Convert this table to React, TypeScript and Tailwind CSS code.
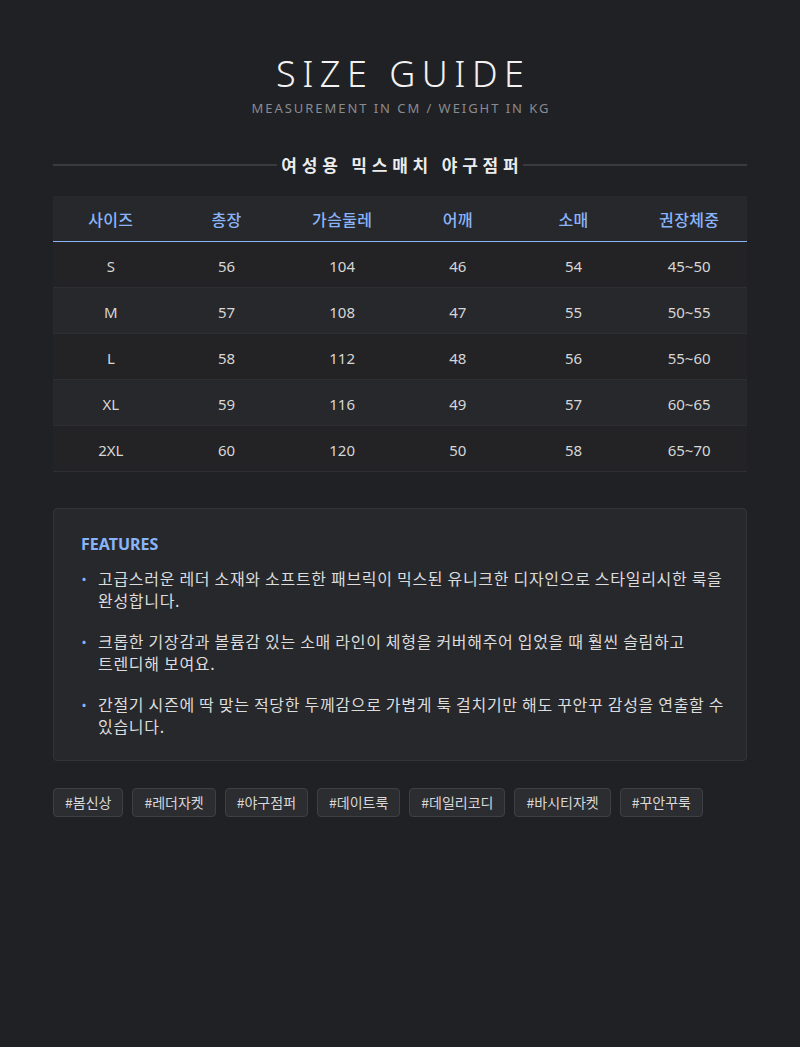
import React from "react";

const font = '"Noto Sans", "Noto Sans CJK KR", sans-serif';
const kr = '"Noto Sans CJK KR", sans-serif';

const headers = ["사이즈", "총장", "가슴둘레", "어깨", "소매", "권장체중"];
const rows = [
  ["S", "56", "104", "46", "54", "45~50"],
  ["M", "57", "108", "47", "55", "50~55"],
  ["L", "58", "112", "48", "56", "55~60"],
  ["XL", "59", "116", "49", "57", "60~65"],
  ["2XL", "60", "120", "50", "58", "65~70"],
];
const features = [
  ["고급스러운 레더 소재와 소프트한 패브릭이 믹스된 유니크한 디자인으로 스타일리시한 룩을", "완성합니다."],
  ["크롭한 기장감과 볼륨감 있는 소매 라인이 체형을 커버해주어 입었을 때 훨씬 슬림하고", "트렌디해 보여요."],
  ["간절기 시즌에 딱 맞는 적당한 두께감으로 가볍게 툭 걸치기만 해도 꾸안꾸 감성을 연출할 수", "있습니다."],
];
const tags = ["#봄신상", "#레더자켓", "#야구점퍼", "#데이트룩", "#데일리코디", "#바시티자켓", "#꾸안꾸룩"];

export default function App() {
  return (
    <div className="min-h-[1047px] w-full bg-[#202125] text-[#e0e0e0]" style={{ fontFamily: font }}>
      <div className="mx-auto w-[694px] pt-[50px]">
        <div className="flex flex-col items-center">
          <h1 className="text-[36px] font-light leading-[48px] tracking-[0.18em] pl-[0.18em] text-[#f2f2f2]">SIZE GUIDE</h1>
          <p className="mt-[1px] text-[13px] leading-[18px] tracking-[0.15em] pl-[0.15em] text-[#8a8b8f]">MEASUREMENT IN CM / WEIGHT IN KG</p>
        </div>

        <div className="mt-[36px] flex items-center">
          <div className="h-[2px] flex-1 bg-[#3a3b3f]" />
          <div className="text-[17px] font-bold tracking-[4.8px] pl-[4.8px] text-[#ececec] leading-[24px]" style={{ fontFamily: kr }}>
            여성용 믹스매치 야구점퍼
          </div>
          <div className="h-[2px] flex-1 bg-[#3a3b3f]" />
        </div>

        <div className="mt-[19px]">
          <div className="grid grid-cols-6 h-[46px] items-center bg-[#27282c] border-b border-[#8ab4f8]">
            {headers.map((h) => (
              <div key={h} className="text-center text-[16px] tracking-[0.3px] font-medium text-[#8ab4f8]" style={{ fontFamily: kr }}>
                {h}
              </div>
            ))}
          </div>
          {rows.map((r, i) => (
            <div
              key={r[0]}
              className={`grid grid-cols-6 h-[46px] pt-[3px] items-center border-b border-[#2e2f33] ${i % 2 === 0 ? "bg-[#232326]" : "bg-[#27282c]"}`}
            >
              {r.map((c, j) => (
                <div key={j} className="text-center text-[15px] text-[#d6d6d6]">
                  {c}
                </div>
              ))}
            </div>
          ))}
        </div>

        <div className="mt-[36px] rounded-[4px] border border-[#333438] bg-[#27282c] pl-[27px] pr-[10px] pt-[24px] pb-[23px]">
          <h2 className="text-[16px] font-bold text-[#8ab4f8] leading-[22px]">FEATURES</h2>
          <ul className="mt-[12px] flex flex-col gap-[19px]">
            {features.map((f) => (
              <li key={f[0]} className="flex text-[16px] leading-[22px] tracking-[0.7px] text-[#dcdcdc]" style={{ fontFamily: kr }}>
                <span className="w-[17px] shrink-0 pl-[1px] text-[#8ab4f8] text-[12px]">•</span>
                <span className="whitespace-nowrap">
                  {f[0]}
                  <br />
                  {f[1]}
                </span>
              </li>
            ))}
          </ul>
        </div>

        <div className="mt-[27px] flex flex-wrap gap-[9px]">
          {tags.map((t) => (
            <span
              key={t}
              className="h-[29px] flex items-center rounded-[4px] border border-[#3f4045] bg-[#2c2d31] px-[11px] text-[14px] text-[#d8d8d8]"
              style={{ fontFamily: kr }}
            >
              {t}
            </span>
          ))}
        </div>
      </div>
    </div>
  );
}
